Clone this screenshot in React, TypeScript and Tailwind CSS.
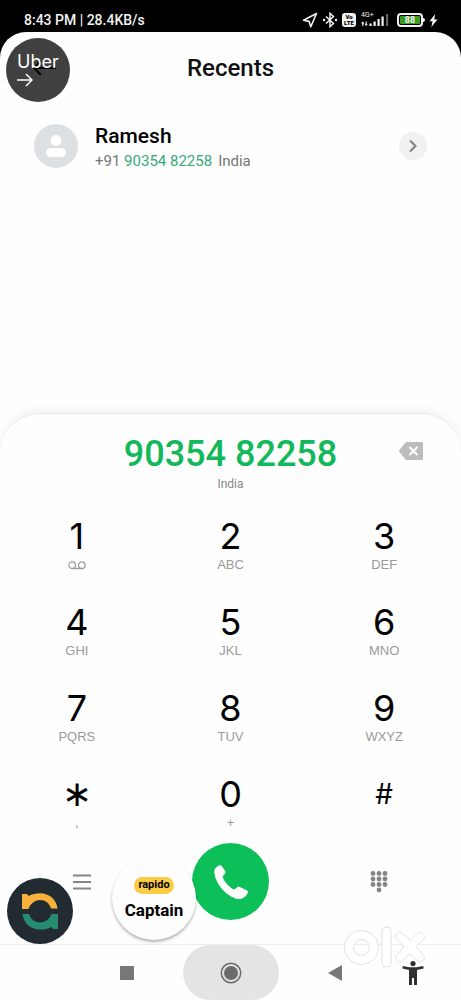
import type { ReactNode } from 'react'

type Key = { digit: string; label: ReactNode; name?: string; style?: string }

const VoicemailIcon = () => (
  <svg width="18" height="9" viewBox="0 0 18 9" fill="none" stroke="currentColor" strokeWidth="1.3" aria-hidden>
    <circle cx="4.2" cy="4.2" r="3.3" />
    <circle cx="13.8" cy="4.2" r="3.3" />
    <path d="M4.2 7.5h9.6" />
  </svg>
)

const KEYS: Key[] = [
  { digit: '1', label: <VoicemailIcon /> },
  { digit: '2', label: 'ABC' },
  { digit: '3', label: 'DEF' },
  { digit: '4', label: 'GHI' },
  { digit: '5', label: 'JKL' },
  { digit: '6', label: 'MNO' },
  { digit: '7', label: 'PQRS' },
  { digit: '8', label: 'TUV' },
  { digit: '9', label: 'WXYZ' },
  { digit: '∗', label: ',', name: 'Star', style: "font-['DejaVu_Sans'] text-[36px]" },
  { digit: '0', label: '+' },
  { digit: '#', label: '', name: 'Pound', style: "font-['Inter'] text-[28px]" },
]

function StatusBar() {
  return (
    <div className="flex h-8 items-center justify-between bg-black pt-2 pr-[23px] pl-6 text-[#f2f2f2]">
      <span className="text-sm font-medium whitespace-nowrap">8:43 PM | 28.4KB/s</span>
      <div className="flex items-center gap-1">
        <svg width="16" height="16" viewBox="0 0 16 16" fill="none" stroke="currentColor" strokeWidth="1.6" strokeLinejoin="round" aria-hidden>
          <path d="M14.5 1.5 1.5 8.2l5.6 1.2 1.7 5.3z" />
        </svg>
        <svg width="16" height="16" viewBox="0 0 16 16" fill="none" stroke="currentColor" strokeWidth="1.5" aria-hidden>
          <path d="m4 4.5 7.5 7L8 14.7V1.3l3.5 3.2-7.5 7" />
          <circle cx="2" cy="8" r="0.5" />
          <circle cx="14" cy="8" r="0.5" />
        </svg>
        <div className="flex h-[14px] w-[14px] flex-col items-center justify-center rounded-[3px] bg-[#f2f2f2] text-[6px] leading-[6px] font-black text-black">
          <span>Vo</span>
          <span>LTE</span>
        </div>
        <div className="relative ml-px h-4 w-7">
          <span className="absolute -top-px left-0 text-[7px] leading-[8px]">4G+</span>
          <svg width="28" height="16" viewBox="0 0 28 16" fill="currentColor" aria-hidden>
            <path d="M1.8 9.5 0 11.5h1.2V14h1.2v-2.500h1.2zM5.2 14 3.6 12h1V9.500h1.2V12h1z" />
            <path d="M8.500 11.500h2.200V14H8.500zM12.500 9.500h2.200V14h-2.200zM16.500 7h2.200v7h-2.200zM20.500 4.500h2.200V14h-2.200z" />
            <path d="M25 2h2.200v12H25z" opacity="0.4" />
          </svg>
        </div>
        <div className="ml-1 flex items-center">
          <div className="flex h-[14px] w-[26px] rounded-[4px] border-2 border-[#f2f2f2] p-px">
            <span className="flex flex-1 items-center justify-center rounded-[1px] bg-[#3f9a22] text-[9px] leading-[8px] font-bold">
              88
            </span>
          </div>
          <span className="h-1 w-0.5 rounded-r-sm bg-[#f2f2f2]" />
        </div>
        <svg width="9" height="13" viewBox="0 0 9 13" fill="currentColor" aria-hidden>
          <path d="M6.2 0 .5 7.2h3L2.4 13l6.1-7.6H5.3z" />
        </svg>
      </div>
    </div>
  )
}

function RecentCall() {
  return (
    <li className="flex items-center px-[34px]">
      <svg width="44" height="44" viewBox="0 0 44 44" aria-hidden>
        <circle cx="22" cy="22" r="22" fill="#dde0e2" />
        <circle cx="22" cy="16.5" r="5.5" fill="#fff" />
        <rect x="12" y="24" width="20" height="9" rx="4.5" fill="#fff" />
      </svg>
      <div className="ml-[17px] flex-1 pt-1">
        <p className="text-[21px] leading-[26px] font-medium text-black">Ramesh</p>
        <p className="text-[15px] leading-6 text-[#757575]">
          +91 <span className="text-[#35a878]">90354 82258</span>
          <span className="ml-1.5">India</span>
        </p>
      </div>
      <button type="button" aria-label="Call details" className="flex h-7 w-7 items-center justify-center rounded-full bg-[#f1f1f1]">
        <svg width="8" height="14" viewBox="0 0 8 14" fill="none" stroke="#808080" strokeWidth="2" aria-hidden>
          <path d="m1 1.5 5.5 5.5L1 12.5" />
        </svg>
      </button>
    </li>
  )
}

function Dialer() {
  return (
    <section className="rounded-t-[40px] border-t border-[#e9e9e9] bg-[#fefefe] pt-5 pb-6 shadow-[0_-3px_12px_rgba(0,0,0,0.05)]">
      <div className="relative text-center">
        <p className="text-4xl leading-10 font-medium text-[#12b85a]">90354 82258</p>
        <p className="mt-0.5 text-xs leading-4 text-[#888888]">India</p>
        <button type="button" aria-label="Delete digit" className="absolute top-2 right-[38px]">
          <svg width="24" height="18" viewBox="0 0 24 18" aria-hidden>
            <path d="M7 0h16a1 1 0 0 1 1 1v16a1 1 0 0 1-1 1H7L.6 10.2a2 2 0 0 1 0-2.4z" fill="#bcbcbc" />
            <path d="m10.500 5 8 8m0-8-8 8" stroke="#fff" strokeWidth="2" />
          </svg>
        </button>
      </div>

      <div className="mt-[26px] grid grid-cols-3 gap-y-[30px]">
        {KEYS.map((key) => (
          <button key={key.digit} type="button" aria-label={key.name} className="flex h-14 flex-col items-center">
            <span className={`h-9 leading-9 text-black ${key.style ?? "font-['Inter'] text-[36px]"}`}>{key.digit}</span>
            <span className="mt-0.5 flex h-[18px] items-center font-['Liberation_Sans'] text-[13px] text-[#9b9b9b]">
              {key.label}
            </span>
          </button>
        ))}
      </div>

      <div className="mt-[11px] flex items-center justify-between px-[73px]">
        <button type="button" aria-label="Menu">
          <svg width="18" height="16" viewBox="0 0 18 16" stroke="#858585" strokeWidth="2" aria-hidden>
            <path d="M0 1.5h18M0 8h18M0 14.5h18" />
          </svg>
        </button>
        <button type="button" aria-label="Call" className="flex h-[77px] w-[77px] items-center justify-center rounded-full bg-[#0cbf59]">
          <svg width="34" height="34" viewBox="0 0 34 34" fill="#fff" aria-hidden>
            <path d="M.4 5C1.500 2.500 3.500.9 5.500.3c1-.2 1.800.2 2.400 1l3.300 5c.5.8.4 1.700-.3 2.400L8.500 11.500c1 4.500 7 11 11.500 13.200l3.200-2.400c.8-.6 1.700-.6 2.500-.2l7 3.200c1.100.5 1.500 1.600 1 2.700-1.200 3-3.700 5.300-7.700 6C14 34-.8 17 .4 5z" />
          </svg>
        </button>
        <button type="button" aria-label="Hide keypad">
          <svg width="18" height="22" viewBox="0 0 18 22" fill="#858585" aria-hidden>
            {[2.5, 8, 13.5].map((y) => [3, 9, 15].map((x) => <circle key={`${x}-${y}`} cx={x} cy={y} r="2.4" />))}
            <circle cx="9" cy="19" r="2.4" />
          </svg>
        </button>
      </div>
    </section>
  )
}

function NavBar() {
  return (
    <nav className="flex h-14 border-t border-[#ededed] bg-[#fefefe]">
      <div className="flex-1" />
      <button type="button" aria-label="Recent apps" className="flex w-[104px] items-center justify-center">
        <span className="h-3.5 w-3.5 bg-[#777777]" />
      </button>
      <button type="button" aria-label="Home" className="mx-1 flex w-24 items-center justify-center rounded-full bg-[#e4e4e4]">
        <svg width="22" height="22" viewBox="0 0 22 22" aria-hidden>
          <circle cx="11" cy="11" r="9.7" fill="none" stroke="#6b6b6b" strokeWidth="1.5" />
          <circle cx="11" cy="11" r="7" fill="#6b6b6b" />
        </svg>
      </button>
      <button type="button" aria-label="Back" className="flex w-[104px] items-center justify-center">
        <svg width="14" height="16" viewBox="0 0 14 16" aria-hidden>
          <path d="M14 0v16L0 8z" fill="#777777" />
        </svg>
      </button>
      <div className="flex w-0 flex-1 items-center">
        <button type="button" aria-label="Accessibility" className="relative z-10 ml-[15px]">
          <svg width="22" height="24" viewBox="0 0 22 24" fill="#303030" aria-hidden>
            <circle cx="11" cy="2.6" r="2.6" />
            <path d="M.8 5 7.500 6.200h7L21.200 5l.5 2.500-6.700 1.400V24h-3v-7h-2v7H7V8.900L.3 7.500z" />
          </svg>
        </button>
      </div>
    </nav>
  )
}

function FloatingApps() {
  return (
    <>
      <button
        type="button"
        className="absolute top-[38px] left-1.5 flex h-16 w-16 flex-col items-start justify-center rounded-full bg-black/75 pl-[11px] text-white"
      >
        <span className="font-['Inter'] text-lg leading-5">Uber</span>
        <svg width="16" height="16" viewBox="0 0 16 16" fill="none" stroke="currentColor" strokeWidth="1.5" aria-hidden>
          <path d="M0 8h15M9 2l6 6-6 6" />
        </svg>
      </button>

      <button type="button" aria-label="Namma Yatri" className="absolute bottom-14 left-[7px] rounded-full">
        <svg width="66" height="66" viewBox="0 0 66 66" aria-hidden>
          <circle cx="33" cy="33" r="33" fill="#222a32" />
          <path d="M15 31V16h5l1.500 2C25 16 29 15.200 33 15.200c9.500 0 16.500 6.500 17.500 15.200h-6.500c-1.500-5-5.800-8.400-11-8.400S23 26 21.500 31z" fill="#f6b23c" />
          <path d="M51 36v15h-5l-1.500-2C41 51 37 51.500 33 51.500c-9.500 0-16.500-6.500-17.500-15.500H22c1.500 5 5.800 8.400 11 8.400S43 41 44.500 36z" fill="#278b70" />
        </svg>
      </button>

      <button
        type="button"
        className="absolute bottom-[60px] left-28 flex h-[84px] w-[84px] flex-col items-center justify-center rounded-full bg-[#fdfdfd] text-black shadow-[0_2px_3px_rgba(0,0,0,0.3)]"
      >
        <span className="mt-0.5 flex h-[17px] items-center rounded-full bg-[#fbcb45] px-1 text-[11px] font-bold">rapido</span>
        <span className="mt-1 text-[17px] leading-6 font-bold">Captain</span>
      </button>

      <svg
        width="84"
        height="44"
        viewBox="0 0 84 44"
        fill="#fff"
        stroke="#d9d9d9"
        strokeWidth="0.8"
        className="pointer-events-none absolute right-[34px] bottom-[30px]"
        aria-hidden
      >
        <path fillRule="evenodd" d="M18.500 4.500a17 17 0 1 1 0 34 17 17 0 0 1 0-34zm0 9a8 8 0 1 0 0 16 8 8 0 0 0 0-16z" />
        <rect x="39" y="1" width="9" height="40" rx="4" />
        <path d="M54 7.500c2-2 4.500-1.500 6 0l7 7 7-7c1.500-1.500 4-2 6 0s1.500 4.500 0 6l-7 7.500 7 7.500c1.500 1.500 2 4 0 6s-4.500 1.500-6 0l-7-7-7 7c-1.500 1.500-4 2-6 0s-1.500-4.500 0-6l7-7.500-7-7.500c-1.500-1.500-2-4 0-6z" />
      </svg>
    </>
  )
}

export default function App() {
  return (
    <div className="relative flex min-h-screen flex-col bg-black font-['Roboto',sans-serif]">
      <StatusBar />
      <main className="flex flex-1 flex-col rounded-t-[26px] bg-[#fefefe]">
        <header className="relative flex h-[72px] items-center justify-center">
          <button type="button" aria-label="Go back" className="absolute left-8">
            <svg width="24" height="16" viewBox="0 0 24 16" fill="none" stroke="#111" strokeWidth="2" aria-hidden>
              <path d="M24 8H2M9 1 2 8l7 7" />
            </svg>
          </button>
          <h1 className="text-2xl font-medium text-[#111111]">Recents</h1>
        </header>
        <ul className="flex-1 pt-[15px]">
          <RecentCall />
        </ul>
        <Dialer />
      </main>
      <NavBar />
      <FloatingApps />
    </div>
  )
}
